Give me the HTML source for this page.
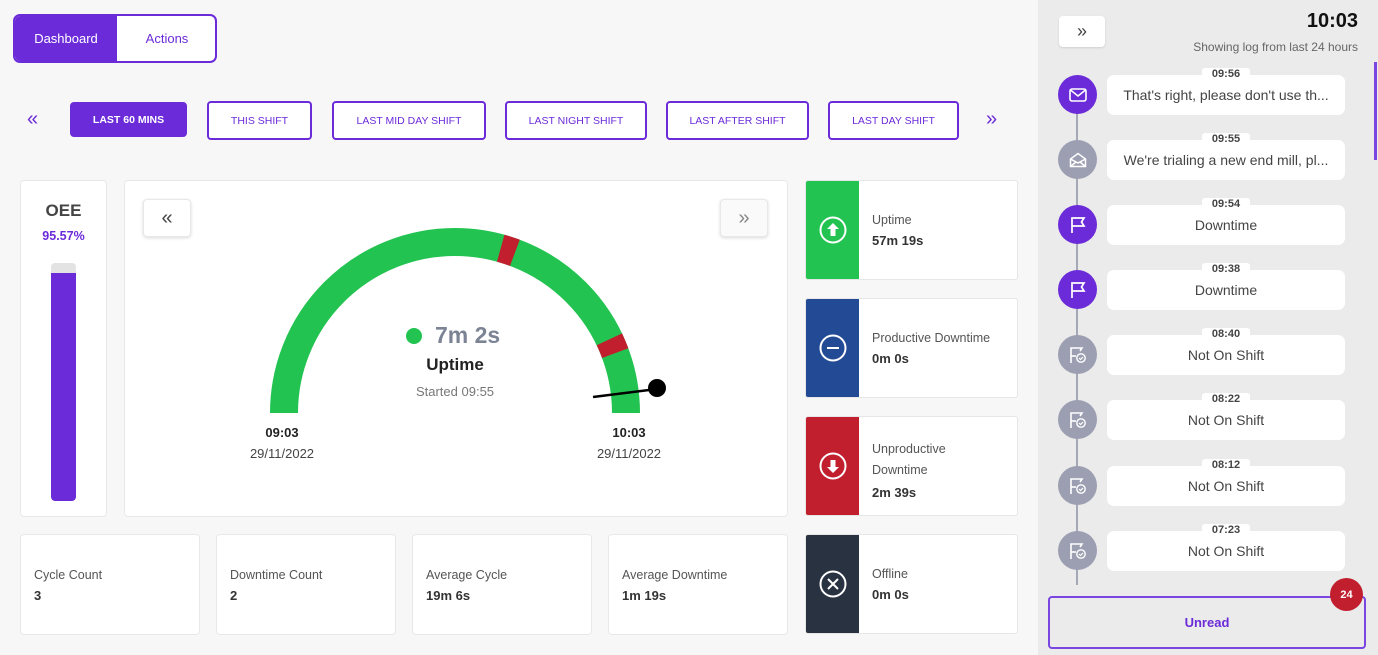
<!DOCTYPE html>
<html><head><meta charset="utf-8"><style>
*{box-sizing:border-box;margin:0;padding:0}
body{width:1378px;height:655px;background:#f7f7f7;font-family:"Liberation Sans",sans-serif;position:relative;overflow:hidden;color:#333}
.a{position:absolute}
.card{position:absolute;background:#fff;border:1px solid #e8e8e8;border-radius:4px}
.sb{position:absolute;border:2px solid #6c2bd9;border-radius:4px;color:#6c2bd9;font-size:10.5px;display:flex;align-items:center;justify-content:center;background:#fff;top:101px;height:39px}
.lbl{font-size:12.5px;color:#555}
.val{font-size:13px;font-weight:bold;color:#333;margin-top:8px}
.st{position:absolute;left:805px;width:213px;height:100px;background:#fff;border:1px solid #e6e6e6;border-radius:3px;overflow:hidden}
.st .c{position:absolute;left:0;top:0;width:53px;height:100%;display:flex;align-items:center;justify-content:center}
.st .t{position:absolute;left:66px}
.dot{position:absolute;left:1058px;width:39px;height:39px;border-radius:50%;display:flex;align-items:center;justify-content:center}
.bub{position:absolute;left:1107px;width:238px;height:40px;background:#fff;border-radius:7px;font-size:14px;color:#444;display:flex;align-items:center;justify-content:center}
.tm{position:absolute;left:1202px;width:48px;text-align:center;font-size:11px;font-weight:bold;color:#444;background:#fff;border-radius:3px;line-height:13px}
</style></head><body>
<!-- tabs -->
<div class="a" style="left:13px;top:14px;width:204px;height:49px;border:2px solid #6c2bd9;border-radius:7px;overflow:hidden;background:#fff">
<div class="a" style="left:0;top:0;width:102px;height:100%;background:#6c2bd9;color:#fff;font-size:13px;display:flex;align-items:center;justify-content:center">Dashboard</div>
<div class="a" style="left:102px;top:0;width:100px;height:100%;color:#6c2bd9;font-size:13px;display:flex;align-items:center;justify-content:center">Actions</div>
</div>
<div class="a" style="left:27px;top:108px;color:#6c2bd9;font-size:20px">«</div>
<div class="sb" style="left:70px;width:117px;top:102px;height:35px;background:#6c2bd9;color:#fff;font-weight:bold">LAST 60 MINS</div>
<div class="sb" style="left:207px;width:105px">THIS SHIFT</div>
<div class="sb" style="left:332px;width:154px">LAST MID DAY SHIFT</div>
<div class="sb" style="left:505px;width:142px">LAST NIGHT SHIFT</div>
<div class="sb" style="left:666px;width:143px">LAST AFTER SHIFT</div>
<div class="sb" style="left:828px;width:131px">LAST DAY SHIFT</div>
<div class="a" style="left:986px;top:108px;color:#6c2bd9;font-size:20px">»</div>

<!-- OEE -->
<div class="card" style="left:20px;top:180px;width:87px;height:337px">
<div class="a" style="left:0;width:100%;top:20px;text-align:center;font-size:17px;font-weight:bold;color:#444">OEE</div>
<div class="a" style="left:0;width:100%;top:48px;text-align:center;font-size:12.5px;font-weight:bold;color:#6c2bd9">95.57%</div>
<div class="a" style="left:30px;top:82px;width:25px;height:238px;background:#e3e3e3;border-radius:4px;overflow:hidden"><div class="a" style="left:0;top:10px;width:100%;height:228px;background:#6c2bd9;border-radius:0 0 4px 4px"></div></div>
</div>

<!-- gauge card -->
<div class="card" style="left:124px;top:180px;width:664px;height:337px"></div>
<div class="card" style="left:143px;top:199px;width:48px;height:38px;box-shadow:0 1px 3px rgba(0,0,0,.15);display:flex;align-items:center;justify-content:center;font-size:20px;color:#444">«</div>
<div class="card" style="left:720px;top:199px;width:48px;height:38px;box-shadow:0 1px 3px rgba(0,0,0,.15);display:flex;align-items:center;justify-content:center;font-size:20px;color:#888;background:#fafafa">»</div>
<svg class="a" style="left:0;top:0" width="1378" height="655">
<path d="M284 413 A171 171 0 0 1 626 413" fill="none" stroke="#22c350" stroke-width="28"/>
<path d="M500.7 248.2 A171 171 0 0 1 514.9 252.8" fill="none" stroke="#c11f2e" stroke-width="28"/>
<path d="M609.4 339.3 A171 171 0 0 1 615.2 353.1" fill="none" stroke="#c11f2e" stroke-width="28"/>
<line x1="593" y1="397" x2="657" y2="389" stroke="#000" stroke-width="2.5"/>
<circle cx="657" cy="388" r="9" fill="#000"/>
<circle cx="414" cy="336" r="8" fill="#22c350"/>
</svg>
<div class="a" style="left:435px;top:322px;font-size:23px;font-weight:bold;color:#7b8394">7m 2s</div>
<div class="a" style="left:355px;width:200px;text-align:center;top:355px;font-size:17px;font-weight:bold;color:#222">Uptime</div>
<div class="a" style="left:355px;width:200px;text-align:center;top:384px;font-size:13px;color:#777">Started 09:55</div>
<div class="a" style="left:232px;width:100px;text-align:center;top:425px;font-size:13px;font-weight:bold;color:#222">09:03</div>
<div class="a" style="left:232px;width:100px;text-align:center;top:446px;font-size:13px;color:#444">29/11/2022</div>
<div class="a" style="left:579px;width:100px;text-align:center;top:425px;font-size:13px;font-weight:bold;color:#222">10:03</div>
<div class="a" style="left:579px;width:100px;text-align:center;top:446px;font-size:13px;color:#444">29/11/2022</div>

<!-- bottom cards -->
<div class="card" style="left:20px;top:534px;width:180px;height:101px;padding:33px 13px"><div class="lbl">Cycle Count</div><div class="val" style="margin-top:6px">3</div></div>
<div class="card" style="left:216px;top:534px;width:180px;height:101px;padding:33px 13px"><div class="lbl">Downtime Count</div><div class="val" style="margin-top:6px">2</div></div>
<div class="card" style="left:412px;top:534px;width:180px;height:101px;padding:33px 13px"><div class="lbl">Average Cycle</div><div class="val" style="margin-top:6px">19m 6s</div></div>
<div class="card" style="left:608px;top:534px;width:180px;height:101px;padding:33px 13px"><div class="lbl">Average Downtime</div><div class="val" style="margin-top:6px">1m 19s</div></div>

<!-- status cards -->
<div class="st" style="top:180px"><div class="c" style="background:#22c350"><svg width="30" height="30" viewBox="0 0 30 30"><circle cx="15" cy="15" r="12.5" fill="none" stroke="#fff" stroke-width="2"/><path d="M15 8 L21 14 H17.5 V21 H12.5 V14 H9 Z" fill="#fff"/></svg></div><div class="t" style="top:32px"><div class="lbl">Uptime</div><div class="val" style="margin-top:6px">57m 19s</div></div></div>
<div class="st" style="top:298px"><div class="c" style="background:#234a94"><svg width="30" height="30" viewBox="0 0 30 30"><circle cx="15" cy="15" r="12.5" fill="none" stroke="#fff" stroke-width="2"/><line x1="9" y1="15" x2="21" y2="15" stroke="#fff" stroke-width="2"/></svg></div><div class="t" style="top:32px"><div class="lbl">Productive Downtime</div><div class="val" style="margin-top:6px">0m 0s</div></div></div>
<div class="st" style="top:416px"><div class="c" style="background:#c11f2e"><svg width="30" height="30" viewBox="0 0 30 30"><circle cx="15" cy="15" r="12.5" fill="none" stroke="#fff" stroke-width="2"/><path d="M15 22 L21 16 H17.5 V9 H12.5 V16 H9 Z" fill="#fff"/></svg></div><div class="t" style="top:22px"><div class="lbl" style="line-height:21px">Unproductive<br>Downtime</div><div class="val" style="margin-top:4px">2m 39s</div></div></div>
<div class="st" style="top:534px"><div class="c" style="background:#283241"><svg width="30" height="30" viewBox="0 0 30 30"><circle cx="15" cy="15" r="12.5" fill="none" stroke="#fff" stroke-width="2"/><path d="M10 10 L20 20 M20 10 L10 20" stroke="#fff" stroke-width="2"/></svg></div><div class="t" style="top:32px"><div class="lbl">Offline</div><div class="val" style="margin-top:6px">0m 0s</div></div></div>

<!-- sidebar -->
<div class="a" style="left:1038px;top:0;width:340px;height:655px;background:#ebebeb"></div>
<div class="a" style="left:1374px;top:62px;width:3px;height:98px;background:#7a45e0"></div>
<div class="a" style="left:1059px;top:16px;width:46px;height:31px;background:#fff;border-radius:4px;box-shadow:0 1px 2px rgba(0,0,0,.12);display:flex;align-items:center;justify-content:center;font-size:18px;color:#444">»</div>
<div class="a" style="right:20px;top:10px;font-size:20px;font-weight:bold;color:#111">10:03</div>
<div class="a" style="right:20px;top:40px;font-size:12px;color:#666">Showing log from last 24 hours</div>
<div class="a" style="left:1076px;top:95px;width:2px;height:490px;background:#a5a8b6"></div>

<div class="dot" style="top:75px;background:#6c2bd9"><svg width="18" height="14"><rect x="1" y="1" width="16" height="12" rx="2" fill="none" stroke="#fff" stroke-width="1.6"/><path d="M1.5 2 L9 8 L16.5 2" fill="none" stroke="#fff" stroke-width="1.6"/></svg></div>
<div class="dot" style="top:140px;background:#9c9fb2"><svg width="18" height="16"><path d="M1.5 7 L9 1.5 L16.5 7 V14.5 H1.5 Z M1.5 7 L9 11 L16.5 7 M1.5 14.5 L7 10 M16.5 14.5 L11 10" fill="none" stroke="#fff" stroke-width="1.5"/></svg></div>
<div class="dot" style="top:205px;background:#6c2bd9"><svg width="18" height="18"><path d="M3 17 V2 H15 L12.5 6 L15 10 H3" fill="none" stroke="#fff" stroke-width="1.7"/></svg></div>
<div class="dot" style="top:270px;background:#6c2bd9"><svg width="18" height="18"><path d="M3 17 V2 H15 L12.5 6 L15 10 H3" fill="none" stroke="#fff" stroke-width="1.7"/></svg></div>
<div class="dot" style="top:335px;background:#9c9fb2"><svg width="20" height="18"><path d="M3 17 V2 H14 L12 5" fill="none" stroke="#fff" stroke-width="1.6"/><path d="M3 10 H8" stroke="#fff" stroke-width="1.6"/><circle cx="13" cy="12" r="4.2" fill="none" stroke="#fff" stroke-width="1.4"/><path d="M11 12 L12.5 13.5 L15 11" fill="none" stroke="#fff" stroke-width="1.2"/></svg></div>
<div class="dot" style="top:400px;background:#9c9fb2"><svg width="20" height="18"><path d="M3 17 V2 H14 L12 5" fill="none" stroke="#fff" stroke-width="1.6"/><path d="M3 10 H8" stroke="#fff" stroke-width="1.6"/><circle cx="13" cy="12" r="4.2" fill="none" stroke="#fff" stroke-width="1.4"/><path d="M11 12 L12.5 13.5 L15 11" fill="none" stroke="#fff" stroke-width="1.2"/></svg></div>
<div class="dot" style="top:466px;background:#9c9fb2"><svg width="20" height="18"><path d="M3 17 V2 H14 L12 5" fill="none" stroke="#fff" stroke-width="1.6"/><path d="M3 10 H8" stroke="#fff" stroke-width="1.6"/><circle cx="13" cy="12" r="4.2" fill="none" stroke="#fff" stroke-width="1.4"/><path d="M11 12 L12.5 13.5 L15 11" fill="none" stroke="#fff" stroke-width="1.2"/></svg></div>
<div class="dot" style="top:531px;background:#9c9fb2"><svg width="20" height="18"><path d="M3 17 V2 H14 L12 5" fill="none" stroke="#fff" stroke-width="1.6"/><path d="M3 10 H8" stroke="#fff" stroke-width="1.6"/><circle cx="13" cy="12" r="4.2" fill="none" stroke="#fff" stroke-width="1.4"/><path d="M11 12 L12.5 13.5 L15 11" fill="none" stroke="#fff" stroke-width="1.2"/></svg></div>

<div class="bub" style="top:75px">That's right, please don't use th...</div><div class="tm" style="top:68px">09:56</div>
<div class="bub" style="top:140px">We're trialing a new end mill, pl...</div><div class="tm" style="top:133px">09:55</div>
<div class="bub" style="top:205px">Downtime</div><div class="tm" style="top:198px">09:54</div>
<div class="bub" style="top:270px">Downtime</div><div class="tm" style="top:263px">09:38</div>
<div class="bub" style="top:335px">Not On Shift</div><div class="tm" style="top:328px">08:40</div>
<div class="bub" style="top:400px">Not On Shift</div><div class="tm" style="top:393px">08:22</div>
<div class="bub" style="top:466px">Not On Shift</div><div class="tm" style="top:459px">08:12</div>
<div class="bub" style="top:531px">Not On Shift</div><div class="tm" style="top:524px">07:23</div>

<div class="a" style="left:1048px;top:596px;width:318px;height:53px;border:2px solid #7a45e0;border-radius:4px;display:flex;align-items:center;justify-content:center;color:#6c2bd9;font-size:13px;font-weight:bold;background:#ebebeb">Unread</div>
<div class="a" style="left:1330px;top:578px;width:33px;height:33px;border-radius:50%;background:#c11f2e;color:#fff;font-size:11px;font-weight:bold;display:flex;align-items:center;justify-content:center">24</div>
</body></html>
